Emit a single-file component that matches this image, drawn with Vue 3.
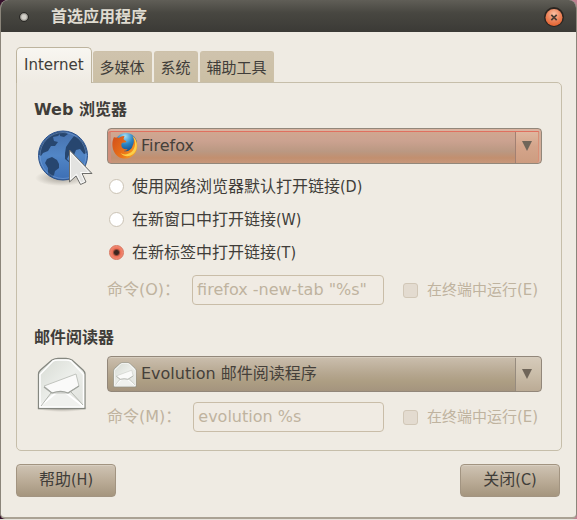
<script setup>
import { ref } from 'vue'

const tabs = ['Internet', '多媒体', '系统', '辅助工具']
const activeTab = ref('Internet')
const linkMode = ref('tab')
const linkModes = [
  { id: 'default', label: '使用网络浏览器默认打开链接(D)' },
  { id: 'window', label: '在新窗口中打开链接(W)' },
  { id: 'tab', label: '在新标签中打开链接(T)' }
]
</script>

<template>
  <div class="window">
    <header class="titlebar">
      <span class="menu-dot"></span>
      <h1>首选应用程序</h1>
      <button class="close" type="button" aria-label="关闭窗口">
        <svg viewBox="0 0 20 20" width="20" height="20">
          <defs>
            <radialGradient id="closeFill" cx=".5" cy=".3" r=".7">
              <stop offset="0" stop-color="#f9c3a6" />
              <stop offset=".5" stop-color="#ee8a62" />
              <stop offset="1" stop-color="#e4622f" />
            </radialGradient>
          </defs>
          <circle cx="10" cy="10" r="10" fill="#2b2521" />
          <circle cx="10" cy="10.500" r="8.500" fill="url(#closeFill)" />
          <path d="M7.300 7.800l5.400 5.400m0-5.400l-5.400 5.400" stroke="#4b3d33" stroke-width="1.700" />
        </svg>
      </button>
    </header>

    <main>
      <div class="tabs" role="tablist">
        <button
          v-for="tab in tabs"
          :key="tab"
          type="button"
          role="tab"
          class="tab"
          :class="{ active: tab === activeTab }"
          :aria-selected="tab === activeTab"
          @click="activeTab = tab"
        >{{ tab }}</button>
      </div>

      <div class="panel">
        <section>
          <h2>Web 浏览器</h2>
          <div class="body">
            <svg class="section-icon" viewBox="0 0 60 60" width="60" height="60">
              <defs>
                <linearGradient id="globe" x1="0" y1="0" x2="0" y2="1">
                  <stop offset="0" stop-color="#4670ac" />
                  <stop offset=".5" stop-color="#5286c6" />
                  <stop offset="1" stop-color="#3c6eb4" />
                </linearGradient>
                <radialGradient id="shade">
                  <stop offset="0" stop-color="#5c564c" stop-opacity=".5" />
                  <stop offset="1" stop-color="#5c564c" stop-opacity="0" />
                </radialGradient>
                <clipPath id="globeClip"><circle cx="29" cy="27.500" r="24" /></clipPath>
              </defs>
              <ellipse cx="27" cy="50" rx="26" ry="8" fill="url(#shade)" />
              <circle cx="29" cy="27.500" r="24.500" fill="url(#globe)" stroke="#2c5189" />
              <g clip-path="url(#globeClip)" fill="#27466f">
                <path d="M7 18l4-6 6-5 6-3h5l-4 4-5 1 1 4 4 1-3 4-4 0-3 5-5 2-2 3-3-2z" />
                <path d="M13 31l5-2 5 3 2 4 0 4-4 3-1 4-4 4-2-5 0-6-3-5z" />
                <path d="M26 4l5 0 3 2-4 3-4-1zM32 19l4-6 4-5 5 2 6 7 2 8-3 1-4-5-4 1-2 5-5 0-2 4 3 3 7 0 3 4-3 6-5-3-2-6-5-4 0-6z" />
              </g>
              <circle cx="29" cy="27.500" r="23" fill="none" stroke="#90b5e4" stroke-opacity=".4" />
              <path d="M35.500 22v32l6.500-6 4.500 8.500 5.500-2.500-4-8.500h10z" fill="#e3e3e1" stroke="#6d6d6a" stroke-linejoin="round" />
              <path d="M36.500 24.500v27l6-5.500 4.500 9 3.500-1.500-4-9h8.500z" fill="none" stroke="#fff" stroke-opacity=".8" />
            </svg>

            <div class="fields">
              <div class="combo hot">
                <svg class="combo-icon" viewBox="0 0 28 28" width="28" height="28">
                  <defs>
                    <radialGradient id="foxBlue" cx=".45" cy=".15" r=".8">
                      <stop offset="0" stop-color="#a9e0f5" />
                      <stop offset=".45" stop-color="#2a86c6" />
                      <stop offset="1" stop-color="#123b78" />
                    </radialGradient>
                    <linearGradient id="foxFire" x1="0" y1=".2" x2="1" y2=".8">
                      <stop offset="0" stop-color="#d4531a" />
                      <stop offset=".6" stop-color="#ec7519" />
                      <stop offset="1" stop-color="#f5a92b" />
                    </linearGradient>
                  </defs>
                  <circle cx="15" cy="12" r="11" fill="url(#foxBlue)" />
                  <path d="M3 5C0 11 1 20 7 24.500c6 4 14 2 17.500-4C28 15 26 7 21.500 4c2 4 1.500 7 0 10-1 4-5 6-9 5 2 0 4-1 4-2-3 1-7-1-6-5 0-2 3-1 5-2-1-2-3-2-3-3l1-3C10 4 9 5 8 6 6 5 4 6 3 5z" fill="url(#foxFire)" />
                  <path d="M21.500 4c4 6 3 12-1 16-4 3-8 3-11 1 5 6 14 3 16-4 1-5 0-10-4-13z" fill="#fbd04a" />
                </svg>
                <select aria-label="Web 浏览器"><option>Firefox</option></select>
                <svg class="combo-arrow" viewBox="0 0 10 10" width="10" height="10"><path d="M0 0h10L5 10z" /></svg>
              </div>

              <div class="radios" role="radiogroup" aria-label="打开链接方式">
                <label v-for="mode in linkModes" :key="mode.id">
                  <input v-model="linkMode" type="radio" name="link-mode" :value="mode.id" />
                  {{ mode.label }}
                </label>
              </div>

              <div class="command">
                <label for="web-command">命令(O)：</label>
                <input id="web-command" type="text" value="firefox -new-tab &quot;%s&quot;" disabled />
                <label class="check"><input type="checkbox" disabled />在终端中运行(E)</label>
              </div>
            </div>
          </div>
        </section>

        <section>
          <h2>邮件阅读器</h2>
          <div class="body">
            <svg class="section-icon" viewBox="0 0 60 60" width="60" height="60">
              <defs>
                <linearGradient id="paper" x1="0" y1="0" x2="1" y2="1">
                  <stop offset="0" stop-color="#d6dad3" />
                  <stop offset=".5" stop-color="#eceeea" />
                  <stop offset="1" stop-color="#dfe1dc" />
                </linearGradient>
                <symbol id="envelope" viewBox="0 0 50 54">
                  <path d="M1.500 17c0-2 1-3 2-4L15 3c2-1 4-1.500 6-1.500h8c2 0 4 .5 6 1.500l11 10c1 1 2 2 2 4v34.500h-46.500z" fill="url(#paper)" stroke="#858780" stroke-width="1.300" />
                  <path d="M3 17.500L16 4c2-1 3-1 5-1h8c2 0 3 0 5 1l12.500 13.500V50H3z" fill="none" stroke="#fff" stroke-width="1.500" />
                  <path d="M3 49l17-14q4-2 8 0l18 14" fill="#f0f1ee" stroke="#fff" stroke-width="2" />
                  <path d="M4 49l10-13M46 48L34 35" fill="none" stroke="#b3b6af" stroke-width="1" />
                  <path d="M7 29l32-12 3 12-11 7H15z" fill="#fafaf9" stroke="#c1c4be" />
                  <path d="M7 30l8 6q9-3 16 0l11-7" fill="none" stroke="#a1a49e" stroke-width="1.300" />
                </symbol>
              </defs>
              <ellipse cx="28" cy="52" rx="26" ry="4" fill="url(#shade)" />
              <use href="#envelope" x="3" y="1" width="50" height="54" />
            </svg>

            <div class="fields">
              <div class="combo">
                <svg class="combo-icon" viewBox="0 0 28 28" width="28" height="28">
                  <use href="#envelope" x="2" y="2" width="24" height="26" />
                </svg>
                <select aria-label="邮件阅读器"><option>Evolution 邮件阅读程序</option></select>
                <svg class="combo-arrow" viewBox="0 0 10 10" width="10" height="10"><path d="M0 0h10L5 10z" /></svg>
              </div>

              <div class="command">
                <label for="mail-command">命令(M)：</label>
                <input id="mail-command" type="text" value="evolution %s" disabled />
                <label class="check"><input type="checkbox" disabled />在终端中运行(E)</label>
              </div>
            </div>
          </div>
        </section>
      </div>

      <footer>
        <button type="button" class="push">帮助(H)</button>
        <button type="button" class="push">关闭(C)</button>
      </footer>
    </main>
  </div>
</template>

<style>
body {
  margin: 0;
  background:
    linear-gradient(#e6e2db, #e6e2db) left bottom / 100% 1px no-repeat,
    linear-gradient(90deg, #35102b 0 50%, #bd7f91 50%);
}
</style>

<style scoped>
* {
  box-sizing: border-box;
}
.window {
  display: flex;
  flex-direction: column;
  min-height: calc(100vh - 1px);
  font: 16px/20px "DejaVu Sans", "Noto Sans CJK SC", sans-serif;
  color: #403d39;
  background: #efebe3;
  border-radius: 8px 8px 5px 5px;
  border: 1px solid #8b857a;
  border-top: 0;
  border-bottom: 2px solid #aaa294;
  margin-bottom: 1px;
  overflow: hidden;
}
button,
input,
select {
  font: inherit;
  color: inherit;
  margin: 0;
}
.titlebar {
  display: flex;
  align-items: center;
  height: 32px;
  padding: 2px 12px 0 18px;
  background: linear-gradient(#605e57, #484741 40%, #3b3a36);
}
.menu-dot {
  width: 10px;
  height: 10px;
  border: 1px solid #292825;
  border-radius: 50%;
  background: radial-gradient(#d4d1ca 35%, #88867f 70%);
}
h1 {
  flex: 1;
  margin: 0 0 0 22px;
  font-size: 16px;
  line-height: 20px;
  font-weight: 700;
  color: #dfdbd0;
}
.close {
  display: flex;
  padding: 0;
  border: 0;
  background: none;
}
main {
  flex: 1;
  padding: 15px 14px 19px 15px;
}
.tabs {
  display: flex;
  align-items: flex-end;
  gap: 2px;
}
.tab {
  height: 31px;
  padding: 2px 6px 0;
  border: 1px solid #cdc1a9;
  border-bottom: 0;
  border-radius: 3px 3px 0 0;
  background: linear-gradient(#cfc3ad, #cbbfa4);
  font-size: 15px;
  line-height: 20px;
}
.tab.active {
  position: relative;
  height: 36px;
  margin: 0 -1px -1px 0;
  padding: 0 7px 2px;
  border-color: #bdb49e;
  border-radius: 5px 5px 0 0;
  background: linear-gradient(#f8f6f1, #efebe3);
}
.panel {
  padding: 17px 19px 18px 17px;
  border: 1px solid #c6beaa;
  border-radius: 0 5px 5px 5px;
}
section + section {
  margin-top: 23px;
}
h2 {
  margin: 0 0 8px;
  font-size: 16px;
  line-height: 20px;
  font-weight: 700;
}
.body {
  display: flex;
  gap: 13px;
}
.section-icon {
  flex: none;
  overflow: visible;
}
.fields {
  flex: 1;
  min-width: 0;
}
.combo {
  position: relative;
  color: #6f6559;
}
.combo select {
  display: block;
  width: 100%;
  height: 36px;
  padding: 0 36px 1px 33px;
  appearance: none;
  border: 1px solid #92877a;
  border-radius: 4px;
  color: #45403a;
  background:
    linear-gradient(90deg, #968b7e, #968b7e) right 25px top / 1px 100% no-repeat,
    linear-gradient(#d6cbbb, #cabda9 50%, #bbab95) right top / 25px 100% no-repeat,
    linear-gradient(#cbbfae, #b5a68f 50%, #ad9e83 72%, #a4947e);
  box-shadow: inset 0 1px 0 #d6ccbd;
}
.combo.hot select {
  background:
    linear-gradient(90deg, #a28072, #a28072) right 25px top / 1px 100% no-repeat,
    linear-gradient(#e2bba4, #d4a58b 50%, #cd9c80) right top / 25px 100% no-repeat,
    linear-gradient(#d3a890, #cba290 35%, #ba9882 66%, #c28f6f 85%, #c7977b);
  box-shadow:
    inset 0 2px 0 #d9b3a0,
    inset -2px 0 0 #d2ac98,
    inset 0 3px 0 #e0705f,
    inset 3px 0 0 #cf8f7b,
    inset -3px 0 0 #d98f76;
}
.combo-icon {
  position: absolute;
  left: 4px;
  top: 4px;
}
.combo-arrow {
  position: absolute;
  right: 10px;
  top: 13px;
  fill: currentColor;
}
.radios {
  display: grid;
  margin-top: 6px;
  font-family: "DejaVu Sans Condensed", "Noto Sans CJK SC", sans-serif;
}
.radios label {
  display: flex;
  align-items: center;
  gap: 8px;
  height: 33px;
  padding-left: 2px;
}
.radios input {
  appearance: none;
  width: 15px;
  height: 15px;
  border: 1px solid #cbc3b5;
  border-radius: 50%;
  background: #fff;
}
.radios input:checked {
  border-color: #d9725b;
  background: radial-gradient(circle, #3d2620 0 2px, #ec6f56 4px, #f5ab98);
}
.command {
  display: flex;
  align-items: center;
  height: 30px;
  margin-top: 6px;
  color: #bfb39f;
}
.combo + .command {
  margin-top: 10px;
}
.command input[type="text"] {
  flex: 1;
  min-width: 0;
  height: 30px;
  margin: 0 19px 0 12px;
  padding: 0 4px 2px;
  border: 1px solid #c9bda8;
  border-radius: 4px;
  background: #f0ebe3;
}
.check {
  display: flex;
  align-items: center;
  flex: none;
  gap: 9px;
  width: 139px;
  font-size: 15px;
}
.check input {
  appearance: none;
  width: 15px;
  height: 15px;
  border: 1px solid #d1c7b7;
  border-radius: 3px;
  background: #e3dbd0;
}
footer {
  display: flex;
  justify-content: space-between;
  padding: 13px 2px 0 0;
}
.push {
  width: 100px;
  height: 33px;
  padding: 0 0 1px;
  border: 1px solid #a29481;
  border-radius: 4px;
  background: linear-gradient(#cfc4b4, #b9aa95 55%, #a5957e);
  box-shadow: inset 0 1px 0 #d8cfc1;
  font-family: "DejaVu Sans Condensed", "Noto Sans CJK SC", sans-serif;
}
</style>
